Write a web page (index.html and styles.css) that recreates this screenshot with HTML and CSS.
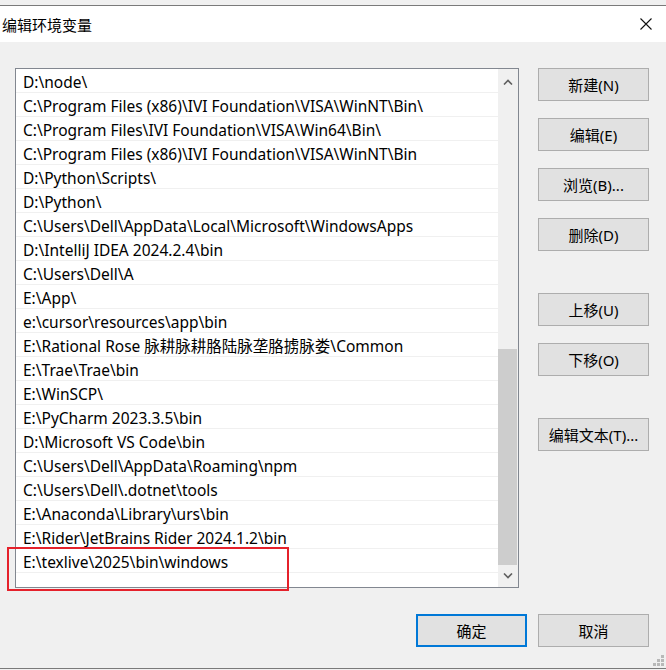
FILE: index.html
```html
<!DOCTYPE html>
<html lang="zh-CN">
<head>
  <meta charset="UTF-8">
  <meta name="viewport" content="width=device-width, initial-scale=1.0">
  <title>编辑环境变量</title>
  <link rel="stylesheet" href="styles.css">
</head>
<body>

  <div class="window">
    <!-- Title bar -->
    <div class="titlebar">
      <span class="title">编辑环境变量</span>
      <svg class="close" width="12" height="12" viewBox="0 0 12 12">
        <path d="M0.5 0.5 L11.5 11.5 M11.5 0.5 L0.5 11.5" stroke="#111" stroke-width="1.1" fill="none"/>
      </svg>
    </div>

    <div class="main">
      <!-- Path list -->
      <div class="list">
        <div class="rows">
          <div class="row">D:\node\</div>
          <div class="row">C:\Program Files (x86)\IVI Foundation\VISA\WinNT\Bin\</div>
          <div class="row">C:\Program Files\IVI Foundation\VISA\Win64\Bin\</div>
          <div class="row">C:\Program Files (x86)\IVI Foundation\VISA\WinNT\Bin</div>
          <div class="row">D:\Python\Scripts\</div>
          <div class="row">D:\Python\</div>
          <div class="row">C:\Users\Dell\AppData\Local\Microsoft\WindowsApps</div>
          <div class="row">D:\IntelliJ IDEA 2024.2.4\bin</div>
          <div class="row">C:\Users\Dell\A</div>
          <div class="row">E:\App\</div>
          <div class="row">e:\cursor\resources\app\bin</div>
          <div class="row">E:\Rational Rose 脉耕脉耕胳陆脉垄胳掳脉娄\Common</div>
          <div class="row">E:\Trae\Trae\bin</div>
          <div class="row">E:\WinSCP\</div>
          <div class="row">E:\PyCharm 2023.3.5\bin</div>
          <div class="row">D:\Microsoft VS Code\bin</div>
          <div class="row">C:\Users\Dell\AppData\Roaming\npm</div>
          <div class="row">C:\Users\Dell\.dotnet\tools</div>
          <div class="row">E:\Anaconda\Library\urs\bin</div>
          <div class="row">E:\Rider\JetBrains Rider 2024.1.2\bin</div>
          <div class="row">E:\texlive\2025\bin\windows</div>
          <div class="row"></div>
        </div>

        <!-- Vertical scrollbar -->
        <div class="scrollbar">
          <div class="arrow up">
            <svg width="10" height="6" viewBox="0 0 10 6">
              <path d="M1 5.5 L5 1.5 L9 5.5" stroke="#606060" stroke-width="1.6" fill="none"/>
            </svg>
          </div>
          <div class="track">
            <div class="thumb"></div>
          </div>
          <div class="arrow">
            <svg width="10" height="6" viewBox="0 0 10 6">
              <path d="M1 0.5 L5 4.5 L9 0.5" stroke="#606060" stroke-width="1.6" fill="none"/>
            </svg>
          </div>
        </div>
      </div>

      <!-- Side buttons -->
      <div class="side">
        <button class="btn">新建(N)</button>
        <button class="btn">编辑(E)</button>
        <button class="btn">浏览(B)...</button>
        <button class="btn">删除(D)</button>
        <button class="btn spaced">上移(U)</button>
        <button class="btn">下移(O)</button>
        <button class="btn spaced">编辑文本(T)...</button>
      </div>
    </div>

    <!-- Dialog buttons -->
    <div class="footer">
      <button class="btn primary">确定</button>
      <button class="btn">取消</button>
    </div>

    <!-- Resize grip -->
    <svg class="grip" width="12" height="12" viewBox="0 0 12 12" fill="#b8b8b8">
      <rect x="8" y="0" width="3" height="3"/>
      <rect x="4" y="4" width="3" height="3"/>
      <rect x="8" y="4" width="3" height="3"/>
      <rect x="0" y="8" width="3" height="3"/>
      <rect x="4" y="8" width="3" height="3"/>
      <rect x="8" y="8" width="3" height="3"/>
    </svg>

    <!-- Highlight box -->
    <div class="mark"></div>
  </div>

</body>
</html>
```

FILE: styles.css
```css
/* Dialog frame */
body {
  margin: 0;
  background-color: #f0f0f0;
  font-family: "Noto Sans", "Noto Sans CJK SC", sans-serif;
  font-size: 15px;
  color: #000;
}

.window {
  position: relative;
  margin-top: 5px;
  height: 662px;
  border-top: 1px solid #7a7a7a;
  border-bottom: 1px solid #7a7a7a;
  background-color: #f0f0f0;
}

.titlebar {
  height: 36px;
  background: #fff;
  display: flex;
  align-items: center;
  justify-content: space-between;
  padding: 0 14px 0 2px;
}

.title {
  font-family: "Noto Sans CJK SC", sans-serif;
  font-size: 15px;
  color: #000;
}

.close {
  margin-top: -1px;
}

/* List + side buttons */
.main {
  display: flex;
  gap: 19px;
  padding: 26px 17px 0 15px;
}

.list {
  width: 502px;
  height: 518px;
  border: 1px solid #828790;
  background: #fff;
  display: flex;
  overflow: hidden;
}

.rows {
  flex: 1;
  overflow: hidden;
}

.row {
  height: 20px;
  line-height: 20px;
  padding-top: 3px;
  border-bottom: 1px solid #f0f0f0;
  padding-left: 7px;
  font-size: 15.5px;
  white-space: nowrap;
  overflow: hidden;
}

.scrollbar {
  width: 20px;
  background: #f0f0f0;
  display: flex;
  flex-direction: column;
}

.arrow {
  height: 22px;
  display: flex;
  align-items: center;
  justify-content: center;
}

.arrow.up {
  height: 26px;
}

.track {
  flex: 1;
  display: flex;
  flex-direction: column;
  justify-content: flex-end;
}

.thumb {
  height: 216px;
  margin-right: 1px;
  background: #cdcdcd;
}

.side {
  display: flex;
  flex-direction: column;
  gap: 17px;
}

.btn {
  width: 111px;
  height: 33px;
  border: 1px solid #adadad;
  background: #e1e1e1;
  font-family: "Noto Sans", "Noto Sans CJK SC", sans-serif;
  font-size: 15px;
  color: #000;
  padding: 0;
}

.btn.spaced {
  margin-top: 25px;
}

.btn.primary {
  border: 2px solid #0078d7;
}

/* Bottom buttons */
.footer {
  display: flex;
  justify-content: flex-end;
  gap: 11px;
  padding: 26px 17px 0 0;
}

.grip {
  position: absolute;
  right: 1px;
  bottom: 1px;
}

.mark {
  position: absolute;
  left: 7px;
  top: 541px;
  width: 278px;
  height: 40px;
  border: 2px solid #e5212b;
}
```
